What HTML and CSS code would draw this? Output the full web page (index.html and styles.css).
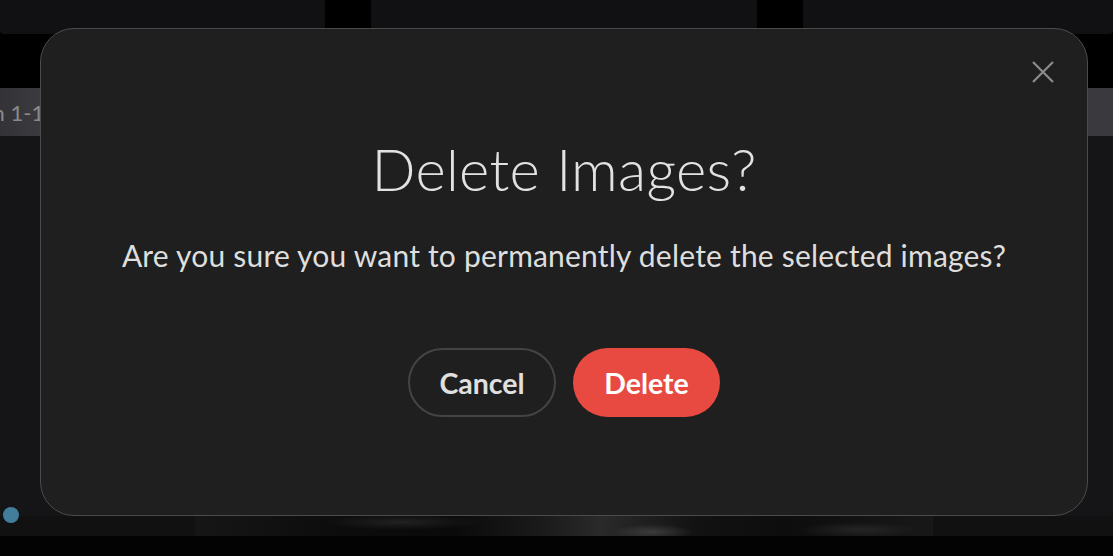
FILE: index.html
```html
<!DOCTYPE html>
<html lang="en">
<head>
<meta charset="utf-8">
<title>Delete Images</title>
<link rel="stylesheet" href="styles.css">
</head>
<body>
<div class="page">
  <div class="topbar">
    <div class="tile tile-a"></div>
    <div class="tile tile-b"></div>
    <div class="tile tile-c"></div>
  </div>
  <div class="gap-band"></div>
  <div class="toolbar"><span class="toolbar-text">Shown 1-12 of 12</span></div>
  <div class="main-area">
    <span class="status-dot"></span>
  </div>
  <div class="strip"><div class="strip-img"></div></div>
  <div class="bottom-band"></div>
</div>

<div class="modal" role="dialog" aria-labelledby="modal-title">
  <button class="close-btn" aria-label="Close">
    <svg width="24" height="24" viewBox="0 0 24 24" fill="none" stroke="currentColor" stroke-width="2.2" stroke-linecap="butt">
      <path d="M2 2 L22 22 M22 2 L2 22"/>
    </svg>
  </button>
  <h1 id="modal-title" class="modal-title">Delete Images?</h1>
  <p class="modal-text">Are you sure you want to permanently delete the selected images?</p>
  <div class="modal-actions">
    <button class="btn btn-cancel">Cancel</button>
    <button class="btn btn-delete">Delete</button>
  </div>
</div>
</body>
</html>
```

FILE: styles.css
```css
* { box-sizing: border-box; }
html, body {
  margin: 0;
  padding: 0;
  background: #000;
  width: 1113px;
  height: 556px;
  overflow: hidden;
  font-family: Lato, "Noto Sans", sans-serif;
}
.page {
  display: flex;
  flex-direction: column;
  height: 556px;
}
.topbar {
  height: 34px;
  display: flex;
  gap: 46px;
}
.tile {
  background: #111113;
  border-radius: 0 0 4px 4px;
}
.tile-a { width: 325px; }
.tile-b { width: 386px; }
.tile-c { flex: 1; }
.gap-band { height: 54px; }
.toolbar {
  height: 48px;
  background: linear-gradient(90deg, #333337 0%, #3c3c40 4%, #38383c 50%, #3a3a3e 100%);
  display: flex;
  align-items: center;
  overflow: hidden;
}
.toolbar-text {
  margin-left: -61px;
  color: #8a8a8e;
  font-size: 22px;
  white-space: nowrap;
}
.main-area {
  height: 380px;
  background: #151517;
  position: relative;
}
.status-dot {
  position: absolute;
  left: 3px;
  bottom: -7px;
  width: 16px;
  height: 16px;
  border-radius: 50%;
  background: #427d9c;
  z-index: 1;
}
.strip {
  height: 20px;
  background: #111112;
  display: flex;
}
.strip-img {
  margin-left: 195px;
  width: 738px;
  background:
    radial-gradient(ellipse 40px 8px at 62% 80%, rgba(90,90,90,0.5), transparent),
    radial-gradient(ellipse 80px 8px at 28% 30%, rgba(55,55,55,0.5), transparent),
    radial-gradient(ellipse 60px 8px at 90% 70%, rgba(60,60,60,0.45), transparent),
    linear-gradient(90deg, #161616, #0c0c0c 20%, #0a0a0a 35%, #1c1c1c 48%, #2a2a2a 55%, #121212 68%, #0d0d0d 80%, #181818 100%);
}
.bottom-band { flex: 1; background: #030303; }

.modal {
  position: absolute;
  left: 40px;
  top: 28px;
  width: 1048px;
  height: 488px;
  background: #1f1f1f;
  border: 1.5px solid #4b4b4b;
  border-radius: 34px;
  display: flex;
  flex-direction: column;
  align-items: center;
  padding-top: 105px;
  z-index: 2;
}
.close-btn {
  position: absolute;
  top: 31px;
  right: 32px;
  width: 24px;
  height: 24px;
  padding: 0;
  border: 0;
  background: none;
  color: #8c8c8c;
  cursor: pointer;
}
.close-btn svg { display: block; }
.modal-title {
  margin: 0;
  font-size: 58px;
  font-weight: 300;
  color: #e2e2e2;
  line-height: 70px;
  letter-spacing: 0.3px;
}
.modal-text {
  margin: 34px 0 0;
  font-size: 30px;
  font-weight: 400;
  color: #dedede;
  line-height: 34px;
  letter-spacing: 0.2px;
}
.modal-actions {
  margin-top: 76px;
  display: flex;
  gap: 17px;
}
.btn {
  height: 69px;
  border-radius: 35px;
  font-family: inherit;
  font-size: 28.5px;
  font-weight: 700;
  cursor: pointer;
}
.btn-cancel {
  width: 148px;
  background: transparent;
  border: 2px solid #444;
  color: #e0e0e0;
}
.btn-delete {
  width: 147px;
  background: #e84a42;
  border: 0;
  color: #fff;
}
```
